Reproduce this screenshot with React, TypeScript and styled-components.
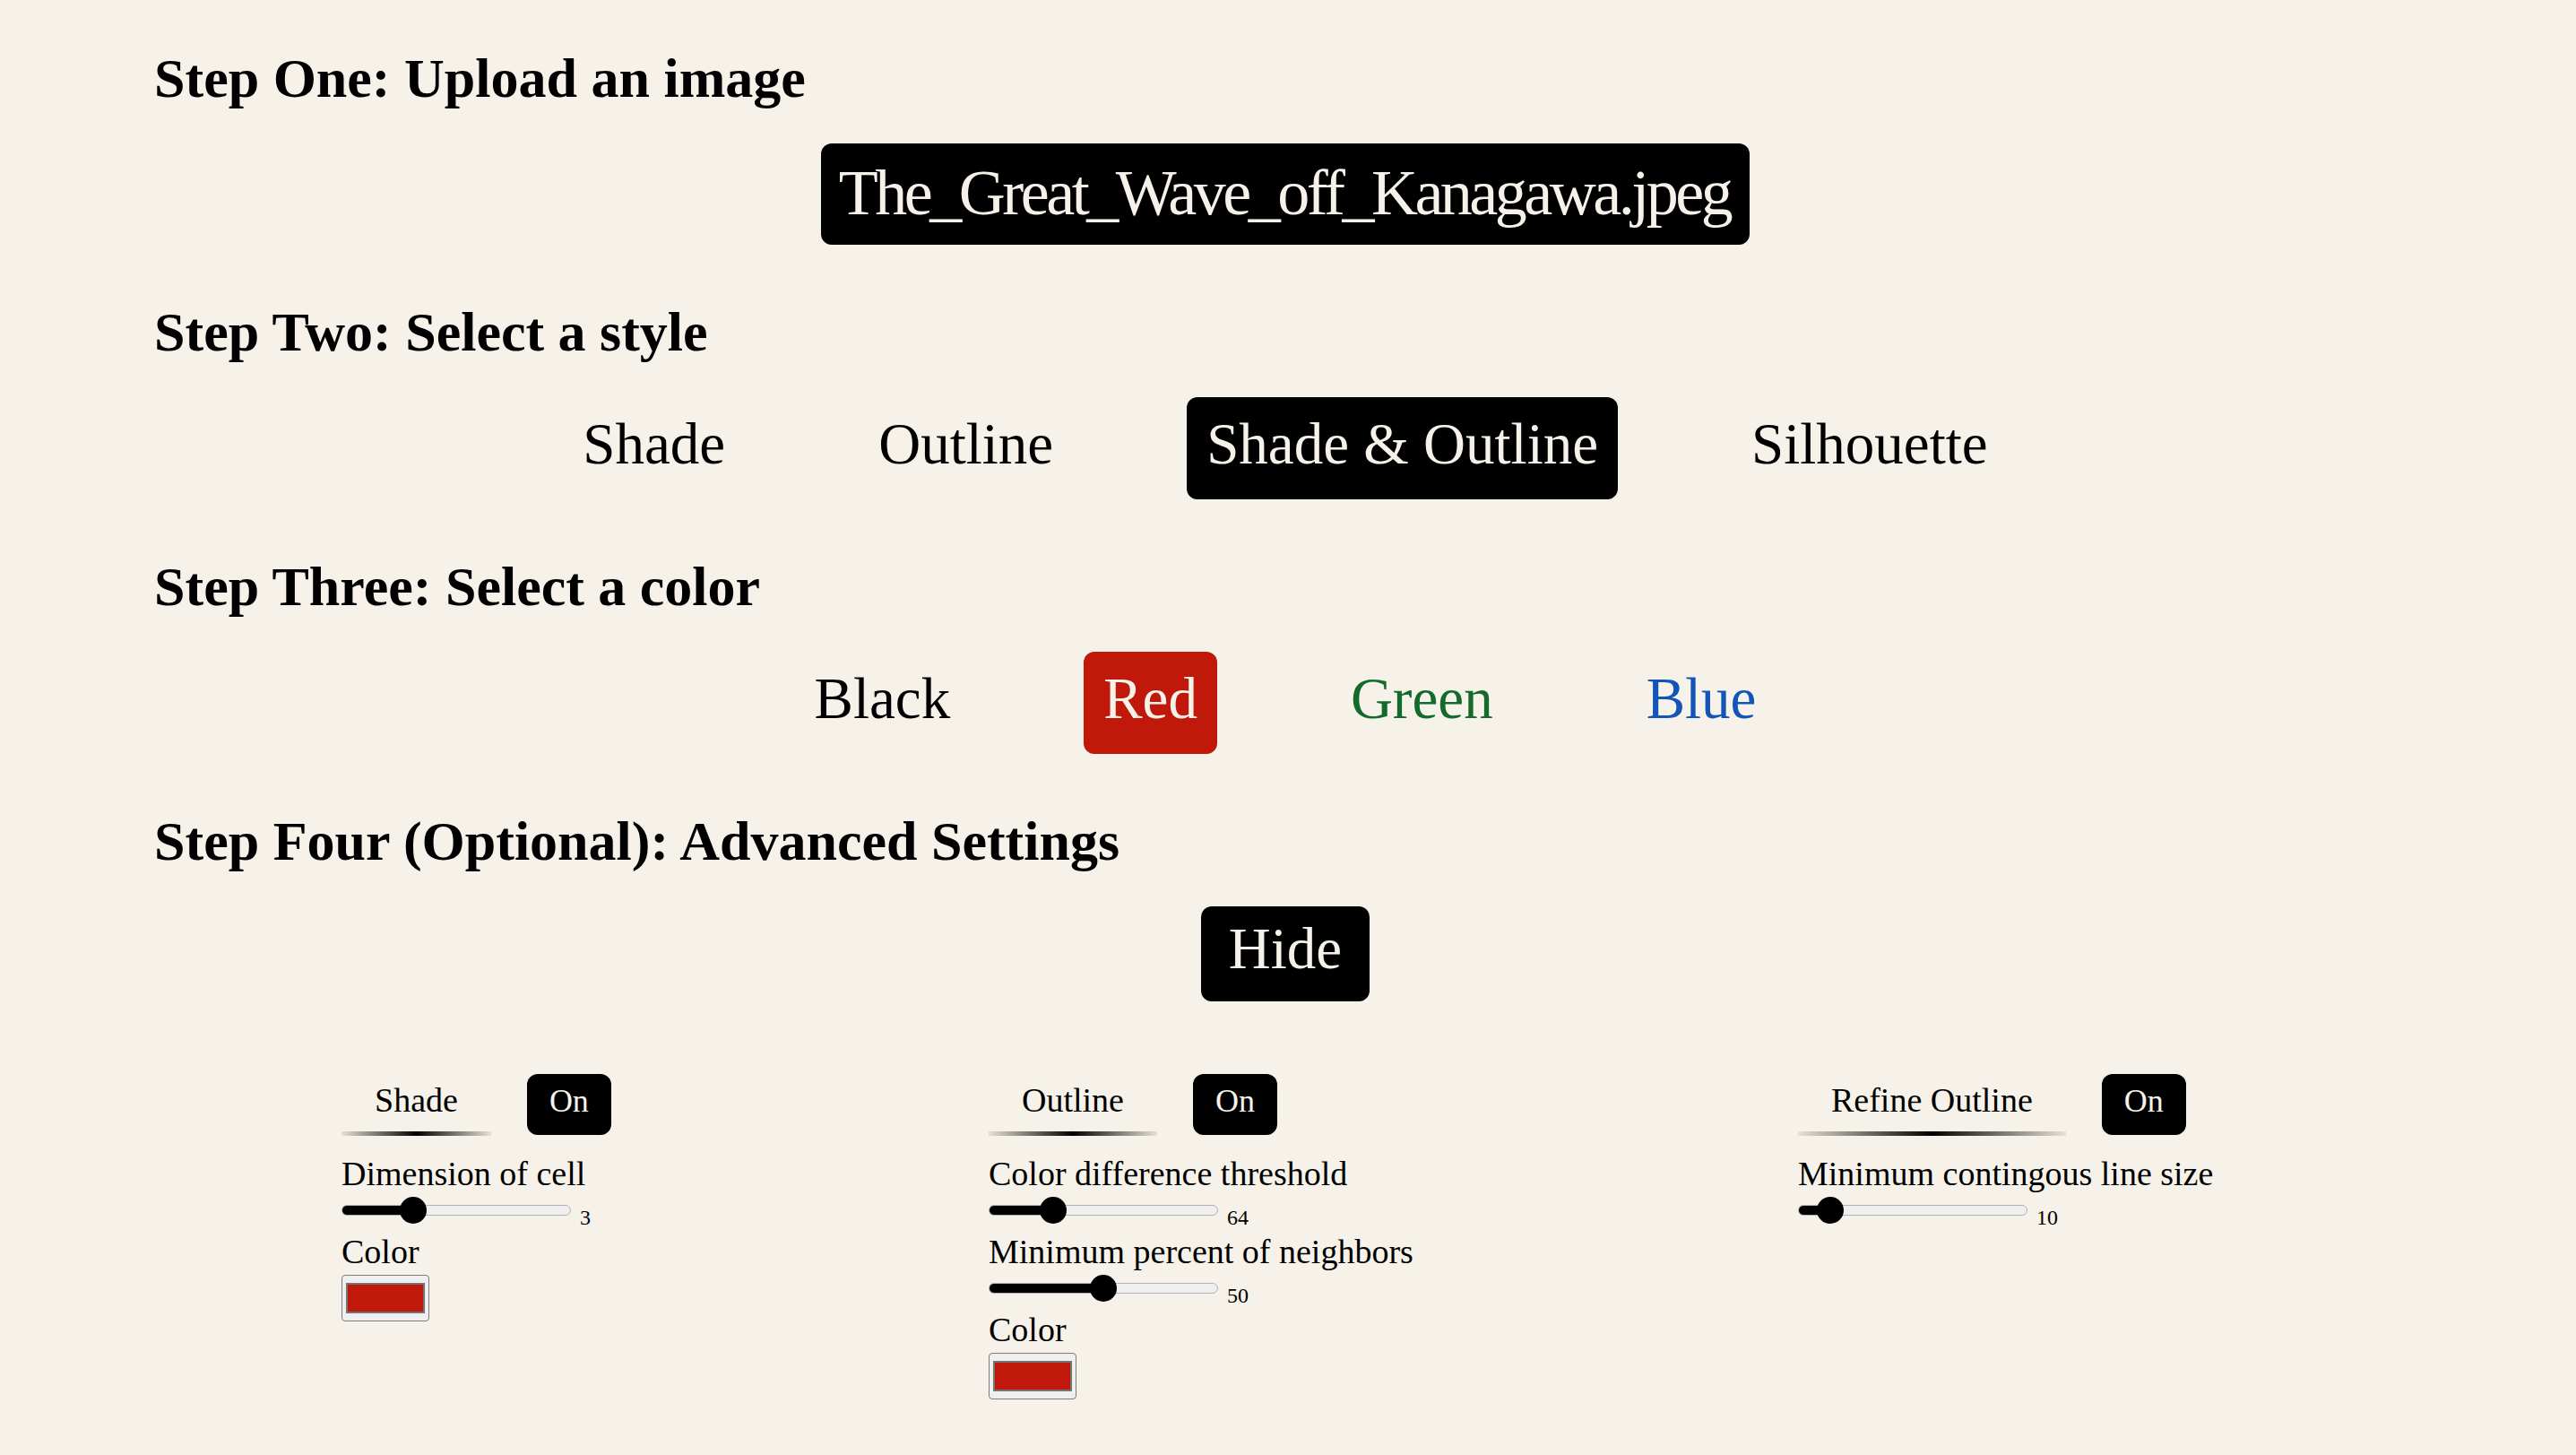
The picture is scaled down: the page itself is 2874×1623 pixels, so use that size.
import React from 'react';
import styled, { createGlobalStyle } from 'styled-components';

const CREAM = '#f6f2ea';
const INK = '#000000';
const RED = '#c0180a';

const GlobalStyle = createGlobalStyle`
  html, body {
    margin: 0;
    padding: 0;
    background: ${CREAM};
    color: ${INK};
    font-family: "Liberation Serif", "Times New Roman", serif;
  }
  body {
    min-height: 100vh;
  }
`;

const Page = styled.main`
  display: flex;
  flex-direction: column;
  gap: 66px;
  padding: 56px 6px 0 0;
`;

const Section = styled.section`
  display: flex;
  flex-direction: column;
  gap: 42px;
`;

const Heading = styled.h2`
  margin: 0;
  padding-left: 172px;
  font-size: 62px;
  line-height: 62px;
  font-weight: 700;
`;

const Row = styled.div<{ $gap?: number }>`
  display: flex;
  justify-content: center;
  align-items: flex-start;
  gap: ${(p) => p.$gap ?? 127}px;
`;

const UploadButton = styled.button`
  border: 0;
  border-radius: 12px;
  background: ${INK};
  color: ${CREAM};
  font-family: inherit;
  font-size: 72px;
  line-height: 80px;
  letter-spacing: -3.5px;
  padding: 15px 22px 18px 20px;
  cursor: pointer;
`;

const OptionButton = styled.button<{ $active?: boolean; $tone?: string; $fill?: string }>`
  border: 0;
  border-radius: 12px;
  background: ${(p) => (p.$active ? p.$fill ?? INK : 'transparent')};
  color: ${(p) => (p.$active ? CREAM : p.$tone ?? INK)};
  font-family: inherit;
  font-size: 65px;
  line-height: 72px;
  padding: 16px 22px 26px;
  cursor: pointer;
`;

const HideButton = styled(OptionButton)`
  padding: 11px 31px 23px;
`;

const SettingsGrid = styled.div`
  display: grid;
  grid-template-columns: 722px 903px auto;
  padding-left: 381px;
  margin-top: 39px;
`;

const SettingsColumn = styled.div`
  display: flex;
  flex-direction: column;
  align-items: flex-start;
`;

const SettingHeader = styled.div`
  display: flex;
  align-items: flex-end;
  gap: 40px;
  margin-bottom: 21px;
`;

const SettingTitle = styled.div`
  font-size: 38px;
  line-height: 42px;
  padding: 0 37px 14px;
  border-bottom: 5px solid transparent;
  border-image: linear-gradient(
      90deg,
      rgba(0, 0, 0, 0.06),
      rgba(0, 0, 0, 1) 50%,
      rgba(0, 0, 0, 0.06)
    )
    1;
`;

const OnButton = styled.button`
  border: 0;
  border-radius: 12px;
  background: ${INK};
  color: ${CREAM};
  font-family: inherit;
  font-size: 36px;
  line-height: 40px;
  padding: 10px 25px 18px;
  margin-bottom: 1px;
  cursor: pointer;
`;

const Field = styled.div`
  display: flex;
  flex-direction: column;
  align-items: flex-start;
  gap: 5px;
  margin-bottom: 10px;
`;

const FieldLabel = styled.label`
  font-size: 38px;
  line-height: 42px;
  white-space: nowrap;
`;

const SliderRow = styled.div`
  display: flex;
  align-items: flex-end;
`;

const Slider = styled.input`
  -webkit-appearance: none;
  appearance: none;
  width: 256px;
  height: 30px;
  margin: 0;
  background: transparent;

  &::-webkit-slider-runnable-track {
    height: 12px;
    border-radius: 8px;
    border: 1.5px solid #b3b3b3;
    background: linear-gradient(90deg, ${INK} 0 var(--fill), #efefef var(--fill) 100%);
  }

  &::-webkit-slider-thumb {
    -webkit-appearance: none;
    width: 30px;
    height: 30px;
    margin-top: -10.5px;
    border-radius: 50%;
    background: ${INK};
  }
`;

const SliderValue = styled.span`
  font-size: 24px;
  line-height: 24px;
  margin: 0 0 -5px 10px;
`;

const Swatch = styled.button`
  box-sizing: border-box;
  width: 98px;
  height: 52px;
  padding: 8px 4px;
  border: 1.5px solid #7d7d7d;
  border-radius: 4px;
  background: #efefef;
  cursor: pointer;
`;

const SwatchFill = styled.span<{ $color: string }>`
  display: block;
  box-sizing: border-box;
  width: 100%;
  height: 100%;
  border: 2px solid #747474;
  background: ${(p) => p.$color};
`;

interface RangeProps {
  label: string;
  value: number;
  min: number;
  max: number;
}

const RangeField = ({ label, value, min, max }: RangeProps) => {
  const fill = 15 + ((value - min) / (max - min)) * (256 - 30);

  return (
    <Field>
      <FieldLabel>{label}</FieldLabel>
      <SliderRow>
        <Slider
          type="range"
          min={min}
          max={max}
          defaultValue={value}
          style={{ '--fill': `${fill}px` } as React.CSSProperties}
        />
        <SliderValue>{value}</SliderValue>
      </SliderRow>
    </Field>
  );
};

const ColorField = () => (
  <Field>
    <FieldLabel>Color</FieldLabel>
    <Swatch aria-label="Color">
      <SwatchFill $color={RED} />
    </Swatch>
  </Field>
);

const styles = ['Shade', 'Outline', 'Shade & Outline', 'Silhouette'];

const colors = [
  { name: 'Black', tone: INK },
  { name: 'Red', tone: RED },
  { name: 'Green', tone: '#136a2a' },
  { name: 'Blue', tone: '#1254b8' },
];

const App = () => {
  return (
    <>
      <GlobalStyle />
      <Page>
        <Section>
          <Heading>Step One: Upload an image</Heading>
          <Row>
            <UploadButton>The_Great_Wave_off_Kanagawa.jpeg</UploadButton>
          </Row>
        </Section>

        <Section>
          <Heading>Step Two: Select a style</Heading>
          <Row>
            {styles.map((s) => (
              <OptionButton key={s} $active={s === 'Shade & Outline'}>
                {s}
              </OptionButton>
            ))}
          </Row>
        </Section>

        <Section>
          <Heading>Step Three: Select a color</Heading>
          <Row>
            {colors.map((c) => (
              <OptionButton
                key={c.name}
                $active={c.name === 'Red'}
                $tone={c.tone}
                $fill={c.tone}
              >
                {c.name}
              </OptionButton>
            ))}
          </Row>
        </Section>

        <Section>
          <Heading>Step Four (Optional): Advanced Settings</Heading>
          <Row>
            <HideButton $active>Hide</HideButton>
          </Row>

          <SettingsGrid>
            <SettingsColumn>
              <SettingHeader>
                <SettingTitle>Shade</SettingTitle>
                <OnButton>On</OnButton>
              </SettingHeader>
              <RangeField label="Dimension of cell" value={3} min={1} max={8} />
              <ColorField />
            </SettingsColumn>

            <SettingsColumn>
              <SettingHeader>
                <SettingTitle>Outline</SettingTitle>
                <OnButton>On</OnButton>
              </SettingHeader>
              <RangeField label="Color difference threshold" value={64} min={0} max={255} />
              <RangeField label="Minimum percent of neighbors" value={50} min={0} max={100} />
              <ColorField />
            </SettingsColumn>

            <SettingsColumn>
              <SettingHeader>
                <SettingTitle>Refine Outline</SettingTitle>
                <OnButton>On</OnButton>
              </SettingHeader>
              <RangeField label="Minimum contingous line size" value={10} min={1} max={100} />
            </SettingsColumn>
          </SettingsGrid>
        </Section>
      </Page>
    </>
  );
};

export default App;
